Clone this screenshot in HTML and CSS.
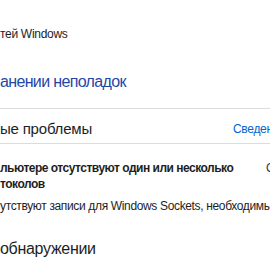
FILE: index.html
```html
<!DOCTYPE html>
<html lang="ru">
<head>
  <meta charset="UTF-8" />
  <title>Устранение неполадок</title>
  <link rel="stylesheet" href="styles.css">
</head>
<body>
  <div class="page">
    <div class="crumb">тей Windows</div>

    <h1 class="title">анении неполадок</h1>

    <div class="head-row">
      <h2 class="head">ые проблемы</h2>
      <a class="details" href="#">Сведения</a>
    </div>

    <div class="issue">
      <div class="issue-top">
        <div class="issue-title">льютере отсутствуют один или несколько<br>токолов</div>
        <div class="issue-state">Обнаружено</div>
      </div>
      <div class="issue-desc">утствуют записи для Windows Sockets, необходимые</div>
    </div>

    <h2 class="head last">обнаружении</h2>
  </div>
</body>
</html>
```

FILE: styles.css
```css
* {
  box-sizing: border-box;
  margin: 0;
  padding: 0;
}

body {
  background: #fff;
  font-family: 'Liberation Sans', Arial, sans-serif;
  color: #1e1e1e;
  overflow: hidden;
}

.page {
  width: 270px;
  height: 260px;
  overflow: hidden;
}

.crumb {
  padding-top: 26px;
  font-size: 12px;
  line-height: 16px;
  letter-spacing: -0.3px;
  white-space: nowrap;
}

.title {
  margin-top: 29px;
  font-size: 16px;
  font-weight: normal;
  line-height: 22px;
  letter-spacing: -0.65px;
  color: #1f48a6;
  white-space: nowrap;
  padding-bottom: 15px;
  border-bottom: 1px solid #dcdcdc;
}

.head-row {
  display: grid;
  grid-template-columns: 233px 60px;
  align-items: center;
  height: 35px;
  padding-top: 5px;
  border-bottom: 1px solid #dcdcdc;
  white-space: nowrap;
}

.head {
  font-size: 15px;
  font-weight: normal;
  line-height: 20px;
  letter-spacing: -0.2px;
  white-space: nowrap;
}

.details {
  font-size: 12px;
  letter-spacing: -0.3px;
  color: #0066cc;
  text-decoration: none;
}

.issue {
  padding-top: 16px;
  font-size: 12px;
  letter-spacing: -0.35px;
}

.issue-top {
  display: grid;
  grid-template-columns: 266px 80px;
}

.issue-title {
  font-weight: bold;
  line-height: 16px;
  letter-spacing: -0.5px;
  white-space: nowrap;
}

.issue-state {
  line-height: 16px;
  color: #333;
}

.issue-desc {
  margin-top: 6px;
  line-height: 16px;
  white-space: nowrap;
}

.last {
  margin-top: 25px;
  font-size: 16px;
  letter-spacing: -0.3px;
}
```
